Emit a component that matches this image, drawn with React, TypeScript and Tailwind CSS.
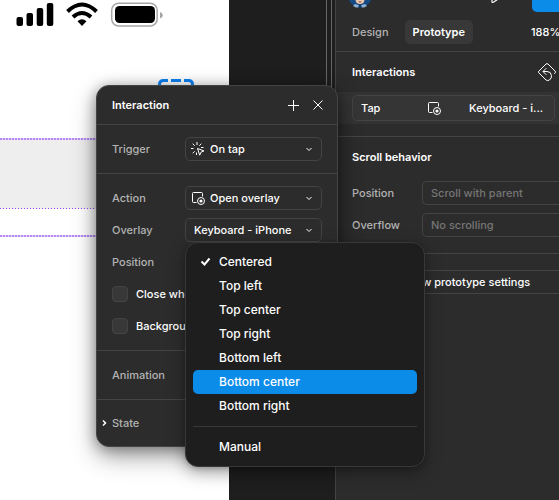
import React from "react";

const menuItems = ["Centered", "Top left", "Top center", "Top right", "Bottom left", "Bottom center", "Bottom right"];

function OverlayIcon() {
  return (
    <svg className="size-4 shrink-0" viewBox="0 0 16 16" fill="none" stroke="currentColor">
      <path d="M6.500 12.500H3.500a1 1 0 0 1-1-1v-8a1 1 0 0 1 1-1h8a1 1 0 0 1 1 1V6.500" />
      <circle cx="11" cy="11" r="3.500" />
      <circle cx="11" cy="11" r="1.600" fill="currentColor" stroke="none" />
    </svg>
  );
}

function TapIcon() {
  return (
    <svg className="size-4 shrink-0" viewBox="0 0 16 16" fill="none" stroke="currentColor">
      <path d="M7 1v3M2.700 2.700l2 2M1 7.500h2.500M2.700 12.300l2-2M11.300 2.700l-2 2M11 6.500h2.500M6.500 11.500V14" />
      <path d="M7.500 7.500l6.500 2.400-3 1.300-1.300 3z" strokeLinejoin="round" />
    </svg>
  );
}

function Chevron() {
  return (
    <svg className="size-2 shrink-0" viewBox="0 0 8 8" fill="none" stroke="currentColor">
      <path d="M1.500 3L4 5.500 6.500 3" />
    </svg>
  );
}

function SelectButton({ label, icon }: { label: string; icon?: React.ReactNode }) {
  return (
    <button
      aria-haspopup="listbox"
      aria-label={label}
      className="flex h-6 w-[137px] items-center gap-1 rounded-[5px] border border-[#444] pr-2 pl-1 text-left text-white"
    >
      {icon}
      <span className={icon ? "flex-1 whitespace-nowrap" : "flex-1 pl-1 whitespace-nowrap"}>{label}</span>
      <Chevron />
    </button>
  );
}

function StatusBar() {
  return (
    <div className="flex h-8 items-start gap-3 pl-4">
      <svg className="h-8 w-[38px]" viewBox="0 0 38 32">
        <rect x="0.500" y="17" width="6.500" height="9" rx="2" />
        <rect x="10.500" y="13" width="6.500" height="13" rx="2" />
        <rect x="20.700" y="8" width="6.500" height="18" rx="2" />
        <rect x="30.800" y="3" width="6.500" height="23" rx="2" />
      </svg>
      <svg className="h-8 w-8" viewBox="0 0 32 32" fill="none" stroke="#000" strokeWidth="4">
        <path d="M1.500 11.500Q16-2.500 30.500 11.500" />
        <path d="M7 17Q16 9 25 17" />
        <path d="M16 26l-4.500-4.800q4.500-4 9 0z" fill="#000" stroke="none" />
      </svg>
      <svg className="h-8 w-[53px]" viewBox="0 0 53 32">
        <rect x="1.700" y="3.200" width="45.500" height="22.800" rx="7" fill="none" stroke="#a6a6a6" strokeWidth="1.500" />
        <rect x="5" y="6" width="40" height="17" rx="4.500" />
        <path d="M50 12q2.800 1 2.800 3.300T50 18.500z" fill="#a6a6a6" />
      </svg>
    </div>
  );
}

function Artboard() {
  return (
    <div className="w-[229px] shrink-0 bg-white">
      <StatusBar />
      <div className="flex h-[106px] pt-[47px] pl-[158px]">
        <svg className="h-9 w-9" viewBox="0 0 36 36" fill="none" stroke="#0d82f5" strokeWidth="3">
          <path d="M1.500 12V5.500q0-4 4-4H10M13 1.500h10M26 1.500h4.500q4 0 4 4V12" />
        </svg>
      </div>
      <div className="h-0.5 bg-[repeating-linear-gradient(90deg,#b58af5_0_2px,#e3d3fb_2px_3px)]" />
      <div className="h-[68px] bg-[#eeeeee]" />
      <div className="h-px bg-[repeating-linear-gradient(90deg,#9747ff_0_1px,#eeeeee_1px_3px)]" />
      <div className="h-[26px]" />
      <div className="h-0.5 bg-[repeating-linear-gradient(90deg,#b58af5_0_2px,#e3d3fb_2px_3px)]" />
    </div>
  );
}

function InteractionPanel() {
  return (
    <section className="absolute top-[85px] left-[96px] w-[242px] rounded-[13px] border border-[#444] bg-[#2c2c2c] text-[#b3b3b3] shadow-[0_10px_24px_rgba(0,0,0,0.35),0_2px_14px_rgba(0,0,0,0.35)]">
      <header className="flex h-[39px] items-center border-b border-[#444] pr-[11px] pl-[15px] text-white">
        <h2 className="flex-1 font-semibold">Interaction</h2>
        <button aria-label="Add interaction" className="mr-2">
          <svg className="size-4" viewBox="0 0 16 16" stroke="currentColor"><path d="M2 8.500h11M7.500 3v11" /></svg>
        </button>
        <button aria-label="Close">
          <svg className="size-4" viewBox="0 0 16 16" stroke="currentColor"><path d="M3.500 3.500l9 9M12.500 3.500l-9 9" /></svg>
        </button>
      </header>
      <div className="flex h-[49px] items-center border-b border-[#444] px-[15px]">
        <span className="flex-1">Trigger</span>
        <SelectButton label="On tap" icon={<TapIcon />} />
      </div>
      <div className="flex flex-col gap-2 border-b border-[#444] px-[15px] py-3">
        <div className="flex h-6 items-center"><span className="flex-1">Action</span><SelectButton label="Open overlay" icon={<OverlayIcon />} /></div>
        <div className="flex h-6 items-center"><span className="flex-1">Overlay</span><SelectButton label="Keyboard - iPhone" /></div>
        <div className="flex h-6 items-center">Position</div>
        {["Close when", "Background"].map((text) => (
          <label key={text} className="flex h-6 w-[74px] items-center gap-2 overflow-hidden whitespace-nowrap text-white">
            <input type="checkbox" className="size-4 shrink-0 appearance-none rounded-[4px] border border-[#444] bg-[#383838]" />
            {text}
          </label>
        ))}
      </div>
      <div className="flex h-[49px] items-center border-b border-[#444] pl-[15px]">Animation</div>
      <button className="flex h-[46px] w-full items-center gap-1 pl-[3px] text-left">
        <svg className="size-2" viewBox="0 0 8 8" fill="none" stroke="#fff" strokeWidth="1.500"><path d="M3 1.500L5.500 4 3 6.500" /></svg>
        State
      </button>
    </section>
  );
}

function PositionMenu() {
  return (
    <div role="listbox" aria-label="Position" className="absolute top-[242px] left-[185px] flex w-60 flex-col rounded-[13px] border border-[#383838] bg-[#1e1e1e] p-[7px] text-xs text-white shadow-[0_5px_17px_rgba(0,0,0,0.35),0_2px_5px_rgba(0,0,0,0.15)]">
      {menuItems.map((item) => (
        <button
          key={item}
          role="option"
          aria-selected={item === "Centered"}
          className={
            item === "Bottom center"
              ? "flex h-6 items-center gap-1.5 rounded-[5px] bg-[#0c8ce9] pl-1.5"
              : "flex h-6 items-center gap-1.5 rounded-[5px] pl-1.5"
          }
        >
          <svg className="size-3.5" viewBox="0 0 14 14" fill="none" stroke="currentColor" strokeWidth="2">
            {item === "Centered" && <path d="M2.500 6.500l3 3 5-6" />}
          </svg>
          {item}
        </button>
      ))}
      <hr className="my-2 border-[#383838]" />
      <button role="option" aria-selected={false} className="flex h-6 items-center pl-[26px]">Manual</button>
    </div>
  );
}

function Sidebar() {
  return (
    <aside className="min-w-0 flex-1 overflow-hidden border-l border-[#444] bg-[#2c2c2c] text-white">
      <div className="flex h-3 items-start pl-3">
        <svg className="h-2 w-6" viewBox="0 0 24 8">
          <path d="M1 0h22a12 12 0 0 1-22 0z" fill="#174b86" />
          <path d="M7.500 0h9q-.5 4-4.500 4T7.500 0z" fill="#ecc9ae" />
          <path d="M10 1.500h4l-2 1.200z" fill="#8b4a3c" />
          <path d="M7 4l5 1.500L17 4l2 2-3 1.500H8L5 6z" fill="#8fb3d1" />
          <path d="M11 4.500h2l1 3.500h-4z" fill="#143c6c" />
        </svg>
        <button aria-label="Present" className="ml-[119px]">
          <svg className="h-4 w-3" viewBox="0 0 12 16" fill="none" stroke="currentColor" strokeWidth="1.200"><path d="M1-6v7.500q0 1.500 1.300.800L8-1.500" /></svg>
        </button>
        <button aria-label="Share" className="ml-auto h-3 w-[27px] rounded-bl-[5px] bg-[#0c8ce9]" />
      </div>
      <nav className="flex h-10 items-center border-b border-[#444] pl-2">
        <button className="h-6 px-2 text-[#b3b3b3]">Design</button>
        <button className="ml-2 h-6 rounded-[5px] bg-[#383838] px-2 font-semibold">Prototype</button>
        <span className="ml-auto w-7 shrink-0 whitespace-nowrap">188%</span>
      </nav>
      <section className="border-b border-[#444]">
        <div className="flex h-10 items-center justify-between pr-0.5 pl-4">
          <h2 className="font-semibold">Interactions</h2>
          <button aria-label="Reset interactions">
            <svg className="size-5" viewBox="0 0 20 20" fill="none" stroke="currentColor" strokeLinejoin="round" strokeLinecap="round">
              <path d="M17.500 11.500l.7-.7q.8-.8 0-1.600L11 2q-1-.800-2 0L1.800 9.200q-.8.800 0 1.600L9 18q1.500 1.200 3.500 0 2.300-1.800 2-4.500-.5-4-4.500-4H6.500" />
              <path d="M9 6.500l-3 3 3 3" />
            </svg>
          </button>
        </div>
        <div className="flex h-8 items-center bg-[#333] pr-1 pl-4">
          <button className="flex h-[26px] flex-1 items-center rounded-[5px] border border-[#444] bg-[#353535] pl-2 text-left whitespace-nowrap">
            <span className="w-[65px]">Tap</span><OverlayIcon /><span className="ml-[27px]">Keyboard - i...</span>
          </button>
        </div>
        <div className="h-3" />
      </section>
      <section className="border-b border-[#444] pb-4 pl-4">
        <h2 className="mb-1 flex h-10 items-center font-semibold">Scroll behavior</h2>
        <div className="flex flex-col gap-2">
          {[["Position", "Scroll with parent"], ["Overflow", "No scrolling"]].map(([name, value]) => (
            <div key={name} className="flex h-6 items-center">
              <span className="w-[70px] text-[#b3b3b3]">{name}</span>
              <button aria-label={name} className="h-6 flex-1 rounded-l-[5px] border border-r-0 border-[#444] pl-2 text-left text-[#757575]">{value}</button>
            </div>
          ))}
        </div>
      </section>
      <div className="pt-4 pl-4">
        <button className="h-6 w-full border-y border-[#444] pl-[50px] text-left whitespace-nowrap">Show prototype settings</button>
      </div>
    </aside>
  );
}

export default function App() {
  return (
    <main className="relative flex min-h-screen overflow-hidden bg-[#1e1e1e] font-['Inter',sans-serif] text-[11px] leading-4 font-medium">
      <Artboard />
      <div className="flex w-[106px] shrink-0 justify-end pr-[3px]">
        <div className="h-[200px] w-1.5 border-x border-[#666]" />
      </div>
      <Sidebar />
      <InteractionPanel />
      <PositionMenu />
    </main>
  );
}
